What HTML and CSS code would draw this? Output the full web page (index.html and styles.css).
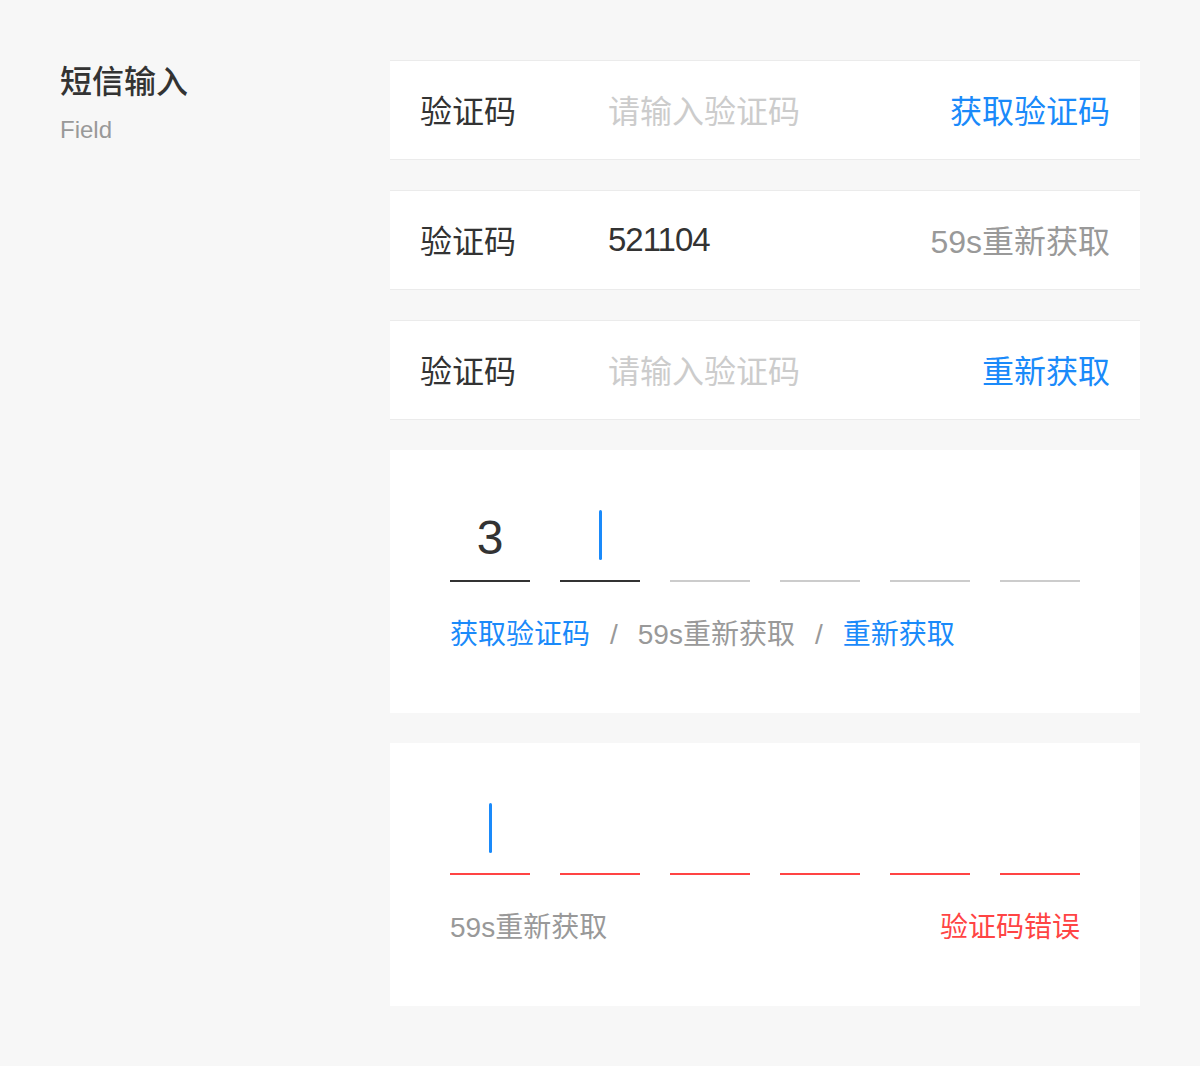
FILE: index.html
```html
<!DOCTYPE html>
<html lang="zh-CN">
<head>
    <meta charset="UTF-8">
    <meta name="viewport" content="width=device-width, initial-scale=1.0">
    <title>短信输入 Field</title>
    <link rel="stylesheet" href="styles.css">
</head>
<body>
    <div class="page">
        <div class="intro">
            <h1>短信输入</h1>
            <p>Field</p>
        </div>

        <div class="demos">
            <div class="field">
                <span class="field-label">验证码</span>
                <span class="field-value placeholder">请输入验证码</span>
                <span class="field-action link">获取验证码</span>
            </div>

            <div class="field">
                <span class="field-label">验证码</span>
                <span class="field-value number">521104</span>
                <span class="field-action muted">59s重新获取</span>
            </div>

            <div class="field">
                <span class="field-label">验证码</span>
                <span class="field-value placeholder">请输入验证码</span>
                <span class="field-action link">重新获取</span>
            </div>

            <div class="code-card">
                <div class="code-boxes">
                    <div class="code-box filled"><span class="digit">3</span></div>
                    <div class="code-box filled"><span class="cursor"></span></div>
                    <div class="code-box"></div>
                    <div class="code-box"></div>
                    <div class="code-box"></div>
                    <div class="code-box"></div>
                </div>
                <div class="code-tip">
                    <span class="link">获取验证码</span>
                    <span class="slash">/</span>
                    <span class="muted">59s重新获取</span>
                    <span class="slash">/</span>
                    <span class="link">重新获取</span>
                </div>
            </div>

            <div class="code-card">
                <div class="code-boxes">
                    <div class="code-box error"><span class="cursor"></span></div>
                    <div class="code-box error"></div>
                    <div class="code-box error"></div>
                    <div class="code-box error"></div>
                    <div class="code-box error"></div>
                    <div class="code-box error"></div>
                </div>
                <div class="code-tip spread">
                    <span class="muted">59s重新获取</span>
                    <span class="danger">验证码错误</span>
                </div>
            </div>
        </div>
    </div>
</body>
</html>
```

FILE: styles.css
```css
/* Basic Reset */
* {
    margin: 0;
    padding: 0;
    box-sizing: border-box;
}

body {
    font-family: "Liberation Sans", "Noto Sans CJK SC", sans-serif;
    background-color: #f7f7f7;
    color: #333;
}

.page {
    display: flex;
    padding: 60px;
}

.intro {
    width: 330px;
    flex-shrink: 0;
}

.intro h1 {
    font-size: 32px;
    font-weight: 500;
    line-height: 44px;
    color: #333;
}

.intro p {
    margin-top: 9px;
    font-size: 24px;
    line-height: 34px;
    color: #999;
}

.demos {
    width: 750px;
    display: flex;
    flex-direction: column;
    gap: 30px;
}

/* single line field */
.field {
    display: flex;
    align-items: center;
    height: 100px;
    padding: 0 30px 3px;
    background-color: #fff;
    border-top: 1px solid #ebebeb;
    border-bottom: 1px solid #ebebeb;
    font-size: 32px;
}

.field-label {
    width: 188px;
    flex-shrink: 0;
}

.field-value {
    flex: 1;
}

.field-value.number {
    font-size: 33px;
    letter-spacing: -1px;
    margin-top: 2px;
}

.placeholder {
    color: #ccc;
}

.link {
    color: #1a8afa;
}

.muted {
    color: #999;
}

.danger {
    color: #f44;
}

/* code boxes */
.code-card {
    background-color: #fff;
    padding: 52px 60px 60px;
}

.code-boxes {
    display: flex;
    gap: 30px;
}

.code-box {
    width: 80px;
    height: 80px;
    padding-top: 8px;
    display: flex;
    justify-content: center;
    border-bottom: 2px solid #ccc;
}

.code-box.filled {
    border-bottom-color: #333;
}

.code-box.error {
    border-bottom-color: #f44;
}

.digit {
    font-size: 48px;
    line-height: 50px;
    margin-top: 3px;
    color: #333;
}

.cursor {
    width: 3px;
    height: 50px;
    border-radius: 2px;
    background-color: #1a8afa;
}

.code-tip {
    display: flex;
    margin-top: 33px;
    margin-bottom: -2px;
    font-size: 28px;
    line-height: 40px;
}

.code-tip.spread {
    justify-content: space-between;
}

.slash {
    color: #999;
    margin: 0 20px;
}
```
